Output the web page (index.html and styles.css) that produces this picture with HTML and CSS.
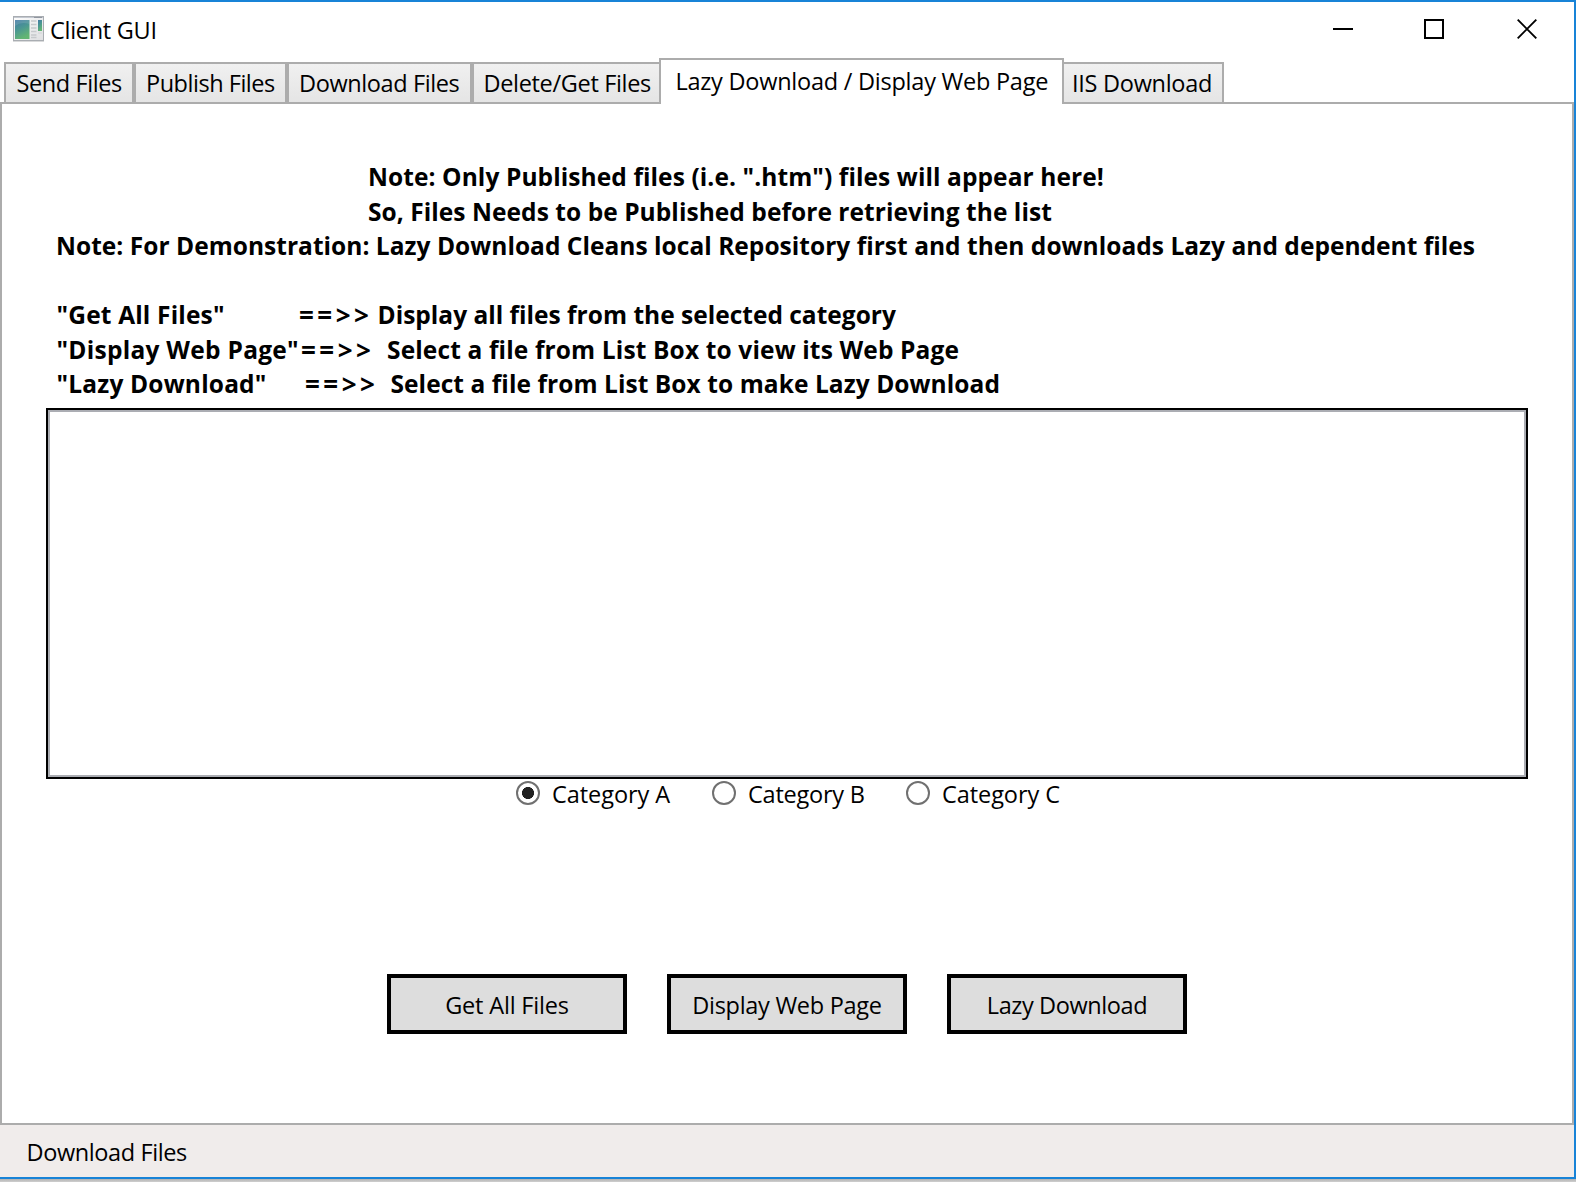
FILE: index.html
```html
<!DOCTYPE html>
<html lang="en">
<head>
<meta charset="utf-8">
<title>Client GUI</title>
<link rel="stylesheet" href="styles.css">
</head>
<body>
<div class="window">
  <header class="titlebar">
    <svg class="app-icon" width="31" height="26" viewBox="0 0 31 26">
      <defs>
        <linearGradient id="pane" x1="0" y1="0" x2="0.4" y2="1">
          <stop offset="0" stop-color="#4379a6"/>
          <stop offset="0.5" stop-color="#4a9693"/>
          <stop offset="1" stop-color="#62b573"/>
        </linearGradient>
        <linearGradient id="frame" x1="0" y1="0" x2="1" y2="1">
          <stop offset="0" stop-color="#fdfdfd"/>
          <stop offset="1" stop-color="#dedfe1"/>
        </linearGradient>
      </defs>
      <rect x="0.5" y="0.5" width="30" height="24" fill="url(#frame)" stroke="#a9adb2"/>
      <path d="M1 1.5h29" stroke="#c3c8d0"/>
      <path d="M21 1.5h8" stroke="#9096a0"/>
      <path d="M0 25.5h31" stroke="#d9dadb"/>
      <rect x="2" y="4" width="14.5" height="19" fill="url(#pane)"/>
      <path d="M2 10Q8 5 16.500 8V4H2z" fill="#fff" opacity="0.12"/>
      <path d="M18 5h5.500M18 8.500h5.500M18 12h5.500M18 15.500h5.500M18 19h5.500M18 21.500h5.500" stroke="#c6c9cc" stroke-width="1.300"/>
      <rect x="25" y="4" width="4" height="11" fill="url(#pane)"/>
      <path d="M25 17h4" stroke="#d0d2d4"/>
    </svg>
    <span class="title">Client GUI</span>
    <div class="controls">
      <svg width="20" height="20" viewBox="0 0 20 20"><path d="M0 10h20" stroke="#000" stroke-width="2"/></svg>
      <svg width="20" height="20" viewBox="0 0 20 20"><rect x="1" y="1" width="18" height="18" fill="none" stroke="#000" stroke-width="2"/></svg>
      <svg width="20" height="20" viewBox="0 0 20 20"><path d="M0.700 0.700L19.300 19.300M19.300 0.700L0.700 19.300" stroke="#000" stroke-width="1.900"/></svg>
    </div>
  </header>

  <nav class="tabs">
    <div class="tab tab-send">Send Files</div>
    <div class="tab tab-publish">Publish Files</div>
    <div class="tab tab-download">Download Files</div>
    <div class="tab tab-delete">Delete/Get Files</div>
    <div class="tab tab-lazy selected">Lazy Download / Display Web Page</div>
    <div class="tab tab-iis">IIS Download</div>
  </nav>

  <main class="panel">
    <div class="notes">
      <p class="note-only">Note: Only Published files (i.e. ".htm") files will appear here!</p>
      <p class="note-so">So, Files Needs to be Published before retrieving the list</p>
      <p class="note-demo">Note: For Demonstration: Lazy Download Cleans local Repository first and then downloads Lazy and dependent files</p>
      <p class="help help-get"><span class="term">"Get All Files"</span><span class="arrow">==&gt;&gt;</span><span class="desc">Display all files from the selected category</span></p>
      <p class="help help-display"><span class="term">"Display Web Page"</span><span class="arrow">==&gt;&gt;</span><span class="desc">Select a file from List Box to view its Web Page</span></p>
      <p class="help help-lazy"><span class="term">"Lazy Download"</span><span class="arrow">==&gt;&gt;</span><span class="desc">Select a file from List Box to make Lazy Download</span></p>
    </div>
    <div class="listbox"></div>
    <div class="categories">
      <div class="option option-a"><span class="radio checked"></span>Category A</div>
      <div class="option option-b"><span class="radio"></span>Category B</div>
      <div class="option option-c"><span class="radio"></span>Category C</div>
    </div>
    <div class="actions">
      <button>Get All Files</button>
      <button class="display">Display Web Page</button>
      <button class="lazy">Lazy Download</button>
    </div>
  </main>

  <footer class="status">Download Files</footer>
</div>
</body>
</html>
```

FILE: styles.css
```css
* { box-sizing: border-box; }

body {
  margin: 0;
  height: 1182px;
  overflow: hidden;
  background: linear-gradient(#b2b2b2, #cfcfcf) bottom / 100% 3px no-repeat #fff;
  font: 23.5px/32px "Open Sans", "Noto Sans", sans-serif;
  color: #000;
  white-space: nowrap;
}

.window {
  display: flex;
  flex-direction: column;
  height: 1179px;
  border: 2px solid #1883d7;
  border-left: 0;
  background: #fff;
}

.titlebar {
  display: flex;
  height: 56px;
  padding: 0 37px 0 13px;
}
.app-icon { margin-top: 14px; }
.title { margin: 12px 0 0 6px; letter-spacing: -0.28px; }
.controls { display: flex; gap: 72px; margin: 17px 0 0 auto; }
.controls svg:nth-child(2) { margin-right: 1px; margin-left: -1px; }

.tabs {
  display: flex;
  align-items: flex-end;
  height: 46px;
  padding-left: 4px;
  background: linear-gradient(#acacac, #acacac) bottom / 100% 2px no-repeat;
}
.tab {
  height: 42px;
  border: 2px solid #acacac;
  background: linear-gradient(#f0f0f0, #e5e5e5);
  line-height: 38px;
}
.tab-send { width: 130px; padding-left: 10.5px; letter-spacing: -0.41px; }
.tab-publish { width: 153px; padding-left: 10px; letter-spacing: -0.47px; }
.tab-download { width: 185px; padding-left: 10px; letter-spacing: -0.39px; }
.tab-delete { width: 187px; padding-left: 9.5px; border-right: 0; letter-spacing: -0.33px; }
.tab-lazy { width: 405px; padding-left: 14.5px; letter-spacing: -0.24px; }
.tab-iis { width: 160px; padding-left: 8px; border-left: 0; letter-spacing: -0.28px; }
.tab.selected {
  height: 46px;
  border-bottom: 0;
  background: #fff;
  line-height: 42px;
}

.panel {
  flex: 1;
  display: flex;
  flex-direction: column;
  border: 2px solid #acacac;
  border-top: 0;
}

.notes {
  height: 304px;
  padding: 56px 0 0 54px;
  font-size: 24.5px;
  font-weight: 700;
  line-height: 34.5px;
}
.notes p { margin: 0; }
.note-only { padding-left: 312px; letter-spacing: 0.09px; }
.note-so { padding-left: 312px; letter-spacing: 0.06px; }
.note-demo { letter-spacing: 0.031px; }
.notes .help { display: flex; height: 34.5px; padding-left: 0.5px; }
.notes .help-get { margin-top: 34.5px; }
.arrow { font-size: 26px; letter-spacing: 3.5px; }
.help-get .term { width: 242.5px; letter-spacing: 0.17px; }
.help-get .arrow { width: 78.5px; }
.help-get .desc { letter-spacing: 0.01px; }
.help-display .term { width: 244.500px; letter-spacing: 0.27px; }
.help-display .arrow { width: 86px; }
.help-display .desc { letter-spacing: 0.14px; }
.help-lazy .term { width: 248.500px; letter-spacing: 0.18px; }
.help-lazy .arrow { width: 85.500px; }
.help-lazy .desc { letter-spacing: 0.07px; }

.listbox {
  height: 371px;
  margin: 0 44px;
  border: 2px solid #000;
  background: #fff;
  box-shadow: inset 0 0 0 2px #abadb3;
}

.categories {
  display: flex;
  height: 40px;
  padding-left: 514px;
}
.option { display: flex; line-height: 30px; letter-spacing: -0.15px; }
.option-a { width: 196px; letter-spacing: -0.05px; }
.option-b { width: 194px; letter-spacing: -0.23px; }
.option-c { letter-spacing: -0.07px; }
.radio {
  width: 24px;
  height: 24px;
  margin: 2px 12px 0 0;
  border: 2px solid #707070;
  border-radius: 50%;
}
.radio.checked { background: radial-gradient(circle, #212121 5.700px, #fff 6.300px); }

.actions {
  display: flex;
  gap: 40px;
  margin-top: 155px;
  padding-left: 385px;
}
.actions button {
  width: 240px;
  height: 60px;
  padding: 2px 0 0;
  border: 4px solid #000;
  background: #ddd;
  color: #000;
  font: inherit;
  letter-spacing: -0.18px;
  line-height: 50px;
}
.actions .display { letter-spacing: -0.28px; }
.actions .lazy { letter-spacing: -0.4px; }

.status {
  height: 52px;
  padding-left: 26.5px;
  background: #f0eceb;
  line-height: 55px;
  letter-spacing: -0.39px;
}
```
